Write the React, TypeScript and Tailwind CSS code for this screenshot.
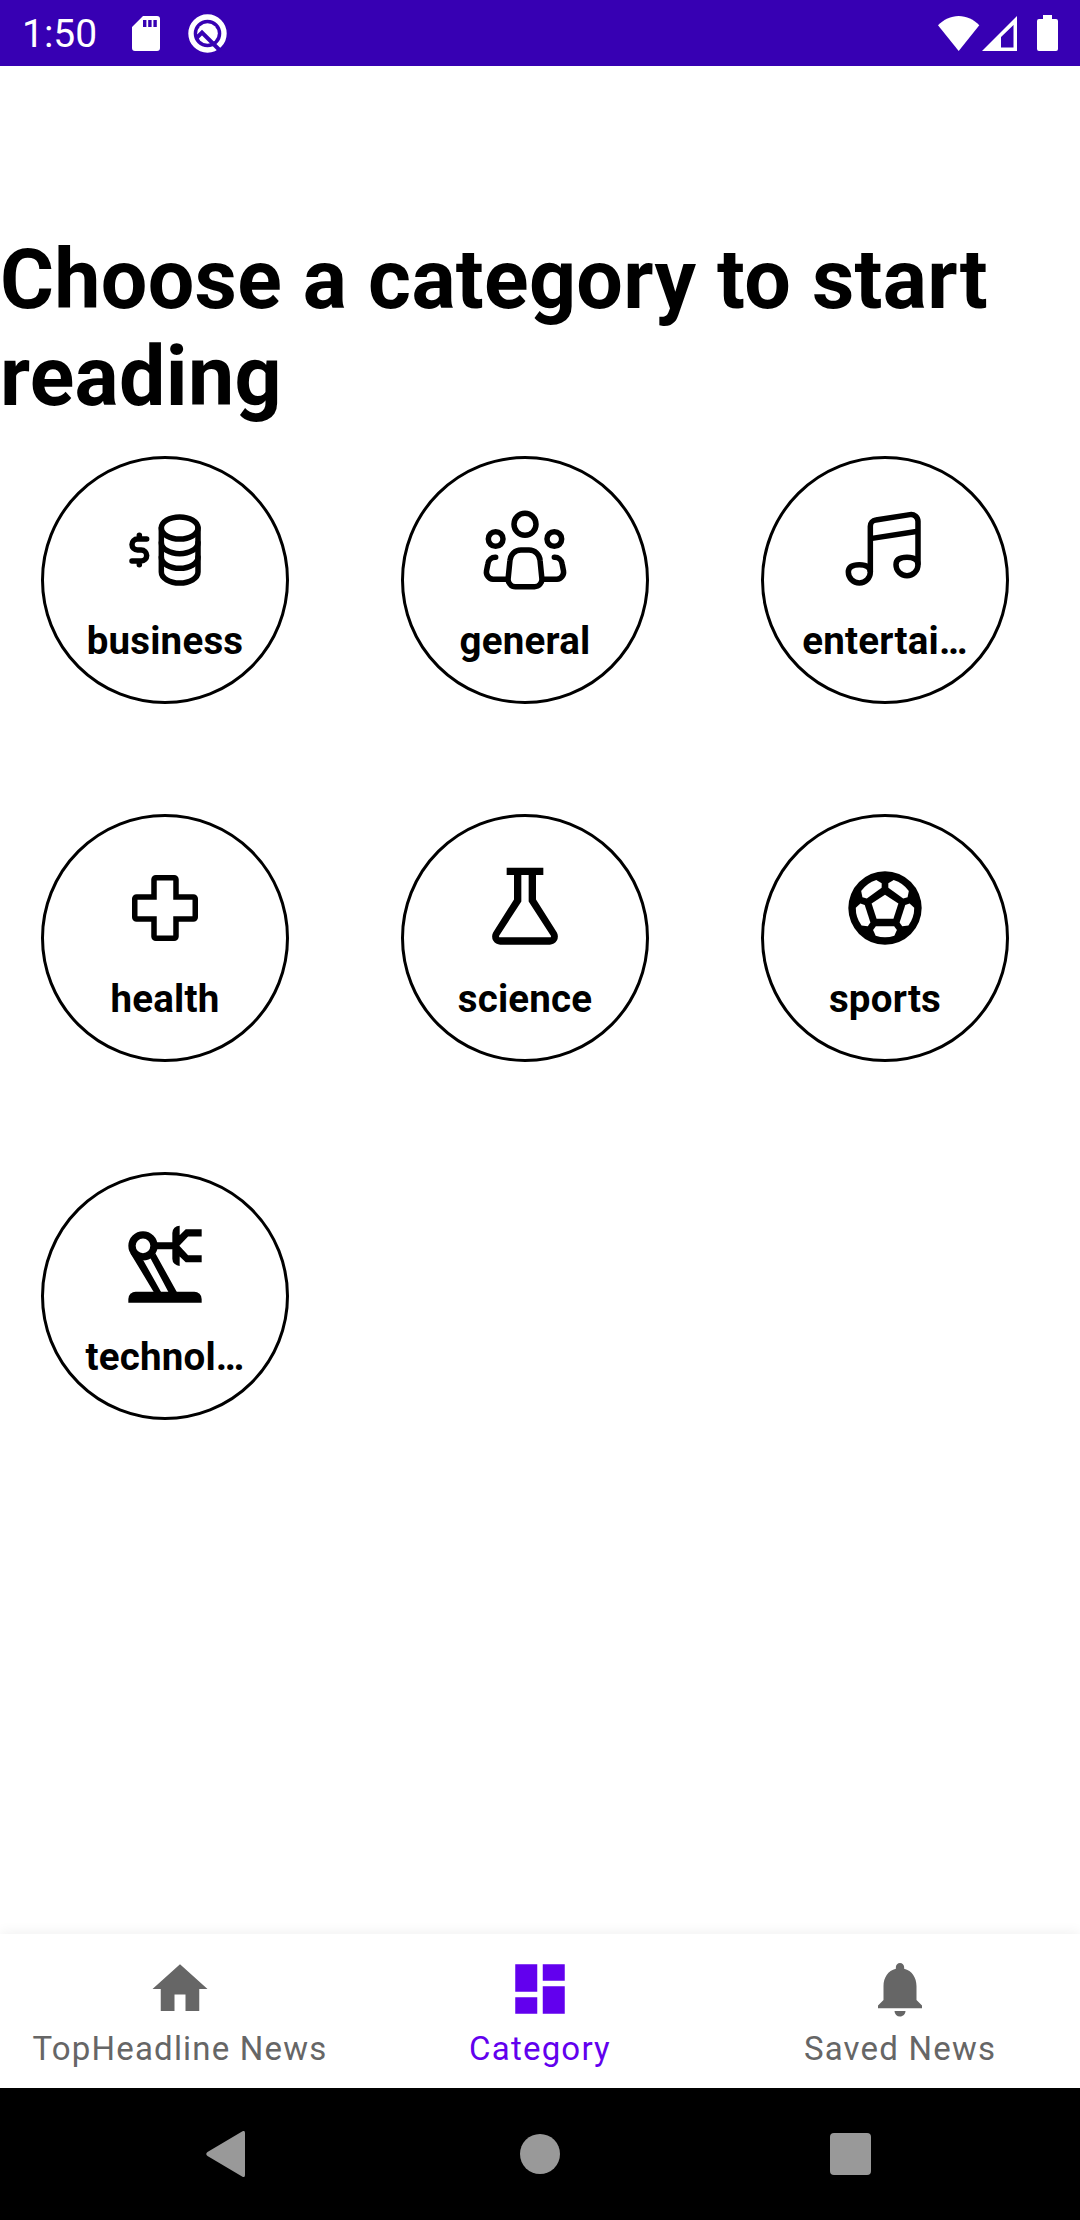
import type { ReactNode } from 'react'
import { MdDashboard, MdHome, MdNotifications } from 'react-icons/md'

const stroked = {
  fill: 'none',
  stroke: 'currentColor',
  strokeWidth: 1.5,
  strokeLinecap: 'round' as const,
}

function Glyph({ children }: { children: ReactNode }) {
  return (
    <svg viewBox="0 0 24 24" className="h-[88px] w-[88px] shrink-0" fill="currentColor">
      {children}
    </svg>
  )
}

function BusinessIcon() {
  return (
    <Glyph>
      <g {...stroked}>
        <ellipse cx="16" cy="6" rx="5" ry="3" />
        <path d="M11 6v12c0 1.66 2.24 3 5 3s5-1.34 5-3V6" />
        <path d="M11 10c0 1.66 2.24 3 5 3s5-1.34 5-3" />
        <path d="M11 14c0 1.66 2.24 3 5 3s5-1.34 5-3" />
        <path d="M7 9H4.5a1.5 1.5 0 0 0 0 3h1a1.5 1.5 0 0 1 0 3H3M5 8v1M5 15v1" />
      </g>
    </Glyph>
  )
}

function GeneralIcon() {
  return (
    <Glyph>
      <g {...stroked}>
        <circle cx="12" cy="5" r="3" />
        <circle cx="4" cy="9" r="2" />
        <circle cx="20" cy="9" r="2" />
        <path d="M7.9 14.8A3 3 0 0 1 10.9 12h2.2a3 3 0 0 1 3 2.8l.5 5a2 2 0 0 1-2 2.2H9.4a2 2 0 0 1-2-2.2z" />
        <path d="M4 14h-.1a2 2 0 0 0-2 1.67l-.4 2.02A2 2 0 0 0 3.3 20H7" />
        <path d="M20 14h.1a2 2 0 0 1 2 1.67l.4 2.02A2 2 0 0 1 20.7 20H17" />
      </g>
    </Glyph>
  )
}

function EntertainmentIcon() {
  return (
    <Glyph>
      <g {...stroked} strokeLinecap="butt">
        <path d="M8 18V5.5a1.7 1.7 0 0 1 1.5-1.7l9.3-1.45A1.9 1.9 0 0 1 21 4.2V16" />
        <path d="M8 8.9l13-2" />
        <path d="M8 18a3 3 0 0 1-6 0c0-1.4 1.1-2 3-2s3 .5 3 2z" />
        <path d="M21 16a3 3 0 0 1-6 0c0-1.4 1.1-2 3-2s3 .5 3 2z" />
      </g>
    </Glyph>
  )
}

function HealthIcon() {
  return (
    <Glyph>
      <path
        {...stroked}
        d="M9 4.25a.5.5 0 0 1 .5-.5h5a.5.5 0 0 1 .5.5V9h4.75a.5.5 0 0 1 .5.5v5a.5.5 0 0 1-.5.5H15v4.75a.5.5 0 0 1-.5.5h-5a.5.5 0 0 1-.5-.5V15H4.25a.5.5 0 0 1-.5-.5v-5a.5.5 0 0 1 .5-.5H9z"
      />
    </Glyph>
  )
}

function ScienceIcon() {
  return (
    <Glyph>
      <path
        fillRule="evenodd"
        d="M7 1v2h2v6.65L3.35 18.6A2.25 2.25 0 0 0 5.25 22h13.5a2.25 2.25 0 0 0 1.9-3.4L15 9.65V3h2V1zM11 3v7.2l-6.05 9.4c-.1.2 0 .4.25.4h13.6c.25 0 .35-.2.25-.4L13 10.2V3z"
      />
    </Glyph>
  )
}

function SportsIcon() {
  return (
    <Glyph>
      <circle cx="12" cy="12" r="10" />
      <path fill="#fff" d="M12 8.4l3.65 2.4-1.35 4.1H9.7l-1.35-4.1z" />
      {[0, 72, 144, 216, 288].map((angle) => (
        <path
          key={angle}
          fill="#fff"
          transform={`rotate(${angle} 12 12)`}
          d="M9.5 17h5l.75 1-.7 1.55q-2.55.85-5.1 0L8.75 18z"
        />
      ))}
    </Glyph>
  )
}

function TechnologyIcon() {
  return (
    <Glyph>
      <path
        fillRule="evenodd"
        d="M6 2.5a4 4 0 1 0 0 8 4 4 0 0 0 0-8zm0 2a2 2 0 1 1 0 4 2 2 0 0 1 0-4z"
      />
      <path d="M2.55 8.5L9 19.2h2L6.1 10.5zM8 9.8L13 19.2h2.3L9.4 8.6z" />
      <path d="M9.7 5.55H14V3a2 2 0 0 1 2-2v2.6L17.65 2H22v1.95h-3.7L15.9 6.5l2.4 2.55H22V11h-4.35L16 9.4V12a2 2 0 0 1-2-2V7.45H9.7z" />
      <path d="M4 19h16a2 2 0 0 1 2 2v1H2v-1a2 2 0 0 1 2-2z" />
    </Glyph>
  )
}

const categories = [
  { name: 'business', icon: BusinessIcon },
  { name: 'general', icon: GeneralIcon },
  { name: 'entertainment', icon: EntertainmentIcon },
  { name: 'health', icon: HealthIcon },
  { name: 'science', icon: ScienceIcon },
  { name: 'sports', icon: SportsIcon },
  { name: 'technology', icon: TechnologyIcon },
]

const tabs = [
  { label: 'TopHeadline News', icon: MdHome, active: false },
  { label: 'Category', icon: MdDashboard, active: true },
  { label: 'Saved News', icon: MdNotifications, active: false },
]

const shortNames: Record<string, string> = {
  entertainment: 'entertai…',
  technology: 'technol…',
}

function StatusBar() {
  return (
    <header className="flex h-[66px] shrink-0 items-center bg-[#3700b3] pr-[22px] pl-[22px] text-white">
      <span className="w-[110px] pt-0.5 text-[39px] leading-none">1:50</span>
      <svg viewBox="0 0 28 35" className="h-[35px] w-7" fill="currentColor">
        <path
          fillRule="evenodd"
          d="M11 0h14a3 3 0 0 1 3 3v29a3 3 0 0 1-3 3H3a3 3 0 0 1-3-3V11zM11 4v7h3.4V4zm5.2 0v7h3.4V4zm5.2 0v7h3.4V4z"
        />
      </svg>
      <svg viewBox="0 0 39 39" className="ml-7 h-[39px] w-[39px]">
        <circle cx="19.5" cy="19.5" r="16.5" fill="none" stroke="#fff" strokeWidth="5.4" />
        <circle cx="19.5" cy="19.5" r="10.3" fill="#fff" />
        <path d="M8 24.5l6-6L32.5 37" fill="none" stroke="#3700b3" strokeWidth="4" />
      </svg>
      <div className="ml-auto flex items-center">
        <svg viewBox="0 0 42 35" className="h-[35px] w-[42px]" fill="currentColor">
          <path d="M0 9.3C5.5 3.5 13 0 20.7 0S36 3.5 41.3 9.3L20.7 35z" />
        </svg>
        <svg viewBox="0 0 35 35" className="ml-0.5 h-[35px] w-[35px]" fill="currentColor">
          <path fillRule="evenodd" d="M35 0v35H0zM31.5 9L19 21v10.5h12.5z" />
        </svg>
        <svg viewBox="0 0 21 36" className="ml-5 h-9 w-[21px]" fill="currentColor">
          <path d="M6 0h9v4h4a2 2 0 0 1 2 2v28a2 2 0 0 1-2 2H2a2 2 0 0 1-2-2V6a2 2 0 0 1 2-2h4z" />
        </svg>
      </div>
    </header>
  )
}

export default function App() {
  return (
    <div className="flex h-[2220px] w-[1080px] flex-col overflow-hidden bg-white font-[Roboto,sans-serif]">
      <StatusBar />

      <main className="flex-1 pt-[165px]">
        <h1 className="text-[82.5px] leading-[97px] font-bold tracking-[0.3px] text-black">
          Choose a category to start reading
        </h1>

        <div className="mt-[31px] grid auto-rows-[358px] grid-cols-3">
          {categories.map((category) => (
            <div key={category.name} className="pl-[41px]">
              <button className="flex h-[248px] w-[248px] flex-col items-center rounded-full border-[3px] border-black pt-[47px] text-black">
                <category.icon />
                <span className="mt-6 text-center text-[38.5px] leading-[46px] font-bold tracking-[0.2px] whitespace-nowrap">
                  {shortNames[category.name] ?? category.name}
                </span>
              </button>
            </div>
          ))}
        </div>
      </main>

      {/* Bottom tabs */}
      <nav className="grid h-[154px] shrink-0 grid-cols-3 bg-white shadow-[0_-2px_12px_rgba(0,0,0,0.06)]">
        {tabs.map((tab) => (
          <a
            key={tab.label}
            className={`flex flex-col items-center pt-[22px] ${tab.active ? 'text-[#6200ee]' : 'text-[#666666]'}`}
          >
            <tab.icon className="h-[66px] w-[66px]" />
            <span className="mt-[7px] text-[33px] leading-[39px] tracking-[1.2px]">{tab.label}</span>
          </a>
        ))}
      </nav>

      {/* System navigation */}
      <footer className="flex h-[132px] shrink-0 items-center bg-black pl-[206px]">
        <svg viewBox="0 0 39 46" className="h-[46px] w-[39px]" fill="#999">
          <path d="M36.5.3Q39-.8 39 2v42q0 2.8-2.5 1.7L1.5 25q-2.5-2 0-4z" />
        </svg>
        <div className="ml-[275px] h-10 w-10 rounded-full bg-[#999999]" />
        <div className="ml-[270px] h-[42px] w-[41px] rounded bg-[#999999]" />
      </footer>
    </div>
  )
}
